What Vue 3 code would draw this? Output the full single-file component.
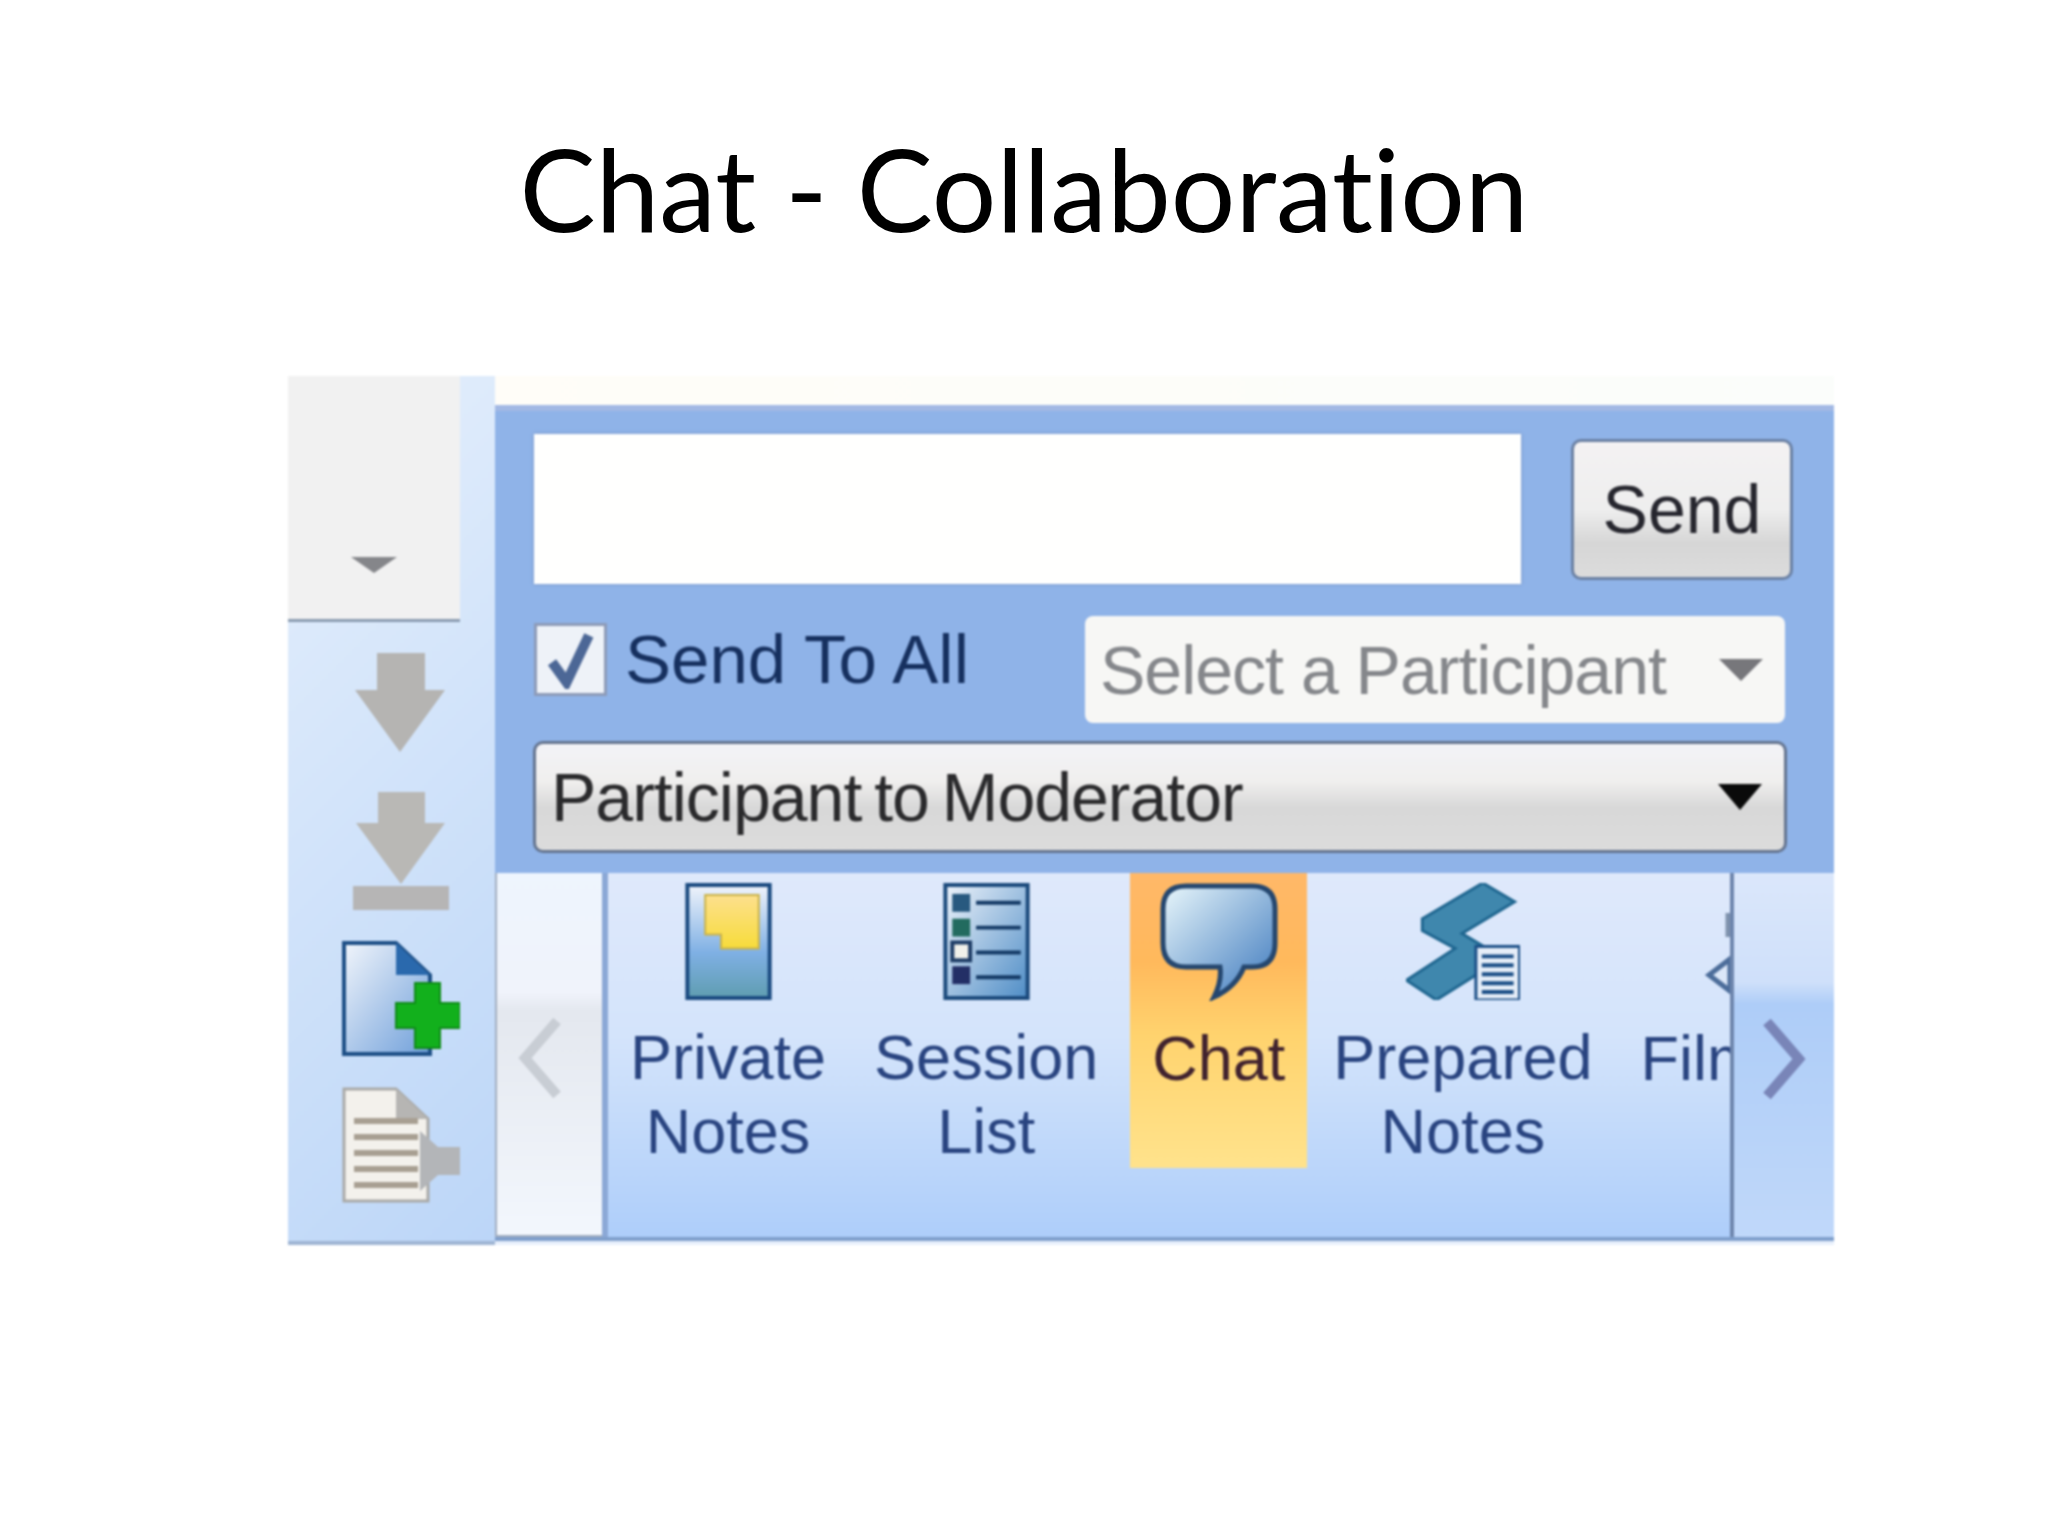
<script setup>
const tabs = [
  { id: 'private', lines: ['Private', 'Notes'] },
  { id: 'session', lines: ['Session', 'List'] },
  { id: 'chat', lines: ['Chat'], active: true },
  { id: 'prepared', lines: ['Prepared', 'Notes'] },
  { id: 'film', lines: ['Film'] }
]
</script>

<template>
  <div class="page">
    <h1 class="title">Chat - Collaboration</h1>

    <div class="panel">
      <aside class="rail">
        <div class="rail-card">
          <svg width="46" height="16" viewBox="0 0 46 16"><path d="M0 0H46L23 16Z" fill="#85868a" /></svg>
        </div>
        <svg class="rail-icon first" width="90" height="99" viewBox="0 0 90 99">
          <path d="M22 0H70V37H90L45 99L0 37H22Z" fill="#b5b4b2" />
        </svg>
        <svg class="rail-icon second" width="96" height="118" viewBox="0 0 96 118">
          <path d="M25 0H72V31H92L48 92L3 31H25Z" fill="#b9b8b5" />
          <rect y="94" width="96" height="24" fill="#b6b5b5" />
        </svg>
        <svg class="rail-icon third" width="118" height="115" viewBox="0 0 118 115">
          <defs>
            <linearGradient id="docFill" x1="0" y1="0" x2="1" y2="1">
              <stop offset="0" stop-color="#f1f5fb" />
              <stop offset="1" stop-color="#6f9fda" />
            </linearGradient>
          </defs>
          <path d="M2 2H54L88 34V113H2Z" fill="url(#docFill)" stroke="#1d4f86" stroke-width="4" />
          <path d="M54 2L88 34H54Z" fill="#2a69ad" />
          <path d="M73 42H98V62H118V87H98V107H73V87H54V62H73Z" fill="#12b01c" stroke="#0e8a18" stroke-width="2" />
        </svg>
        <svg class="rail-icon fourth" width="118" height="116" viewBox="0 0 118 116">
          <path d="M2 2H54L86 32V114H2Z" fill="#f3f1ec" stroke="#a9a9a7" stroke-width="3" />
          <path d="M54 2L86 32H54Z" fill="#b6b5b3" />
          <path d="M12 34H76M12 50H76M12 66H76M12 82H76M12 98H76" stroke="#a89f92" stroke-width="6" />
          <path d="M78 44L96 60H118V88H96L78 104Z" fill="#b3b5b8" />
        </svg>
      </aside>

      <main class="main">
        <div class="strip"></div>

        <section class="compose">
          <div class="send-row">
            <div class="message"></div>
            <button class="send">Send</button>
          </div>

          <div class="option-row">
            <label class="send-all">
              <span class="check">
                <svg width="50" height="58" viewBox="0 0 44 52">
                  <path d="M5 28L18 46L38 4" fill="none" stroke="#4c6796" stroke-width="9" />
                </svg>
              </span>
              Send To All
            </label>
            <div class="participant">
              <span>Select a Participant</span>
              <svg width="44" height="22" viewBox="0 0 44 22"><path d="M0 0H44L22 22Z" fill="#77777b" /></svg>
            </div>
          </div>

          <div class="mode">
            <span>Participant to Moderator</span>
            <svg width="44" height="26" viewBox="0 0 44 26"><path d="M0 0H44L22 26Z" fill="#0a0a0a" /></svg>
          </div>
        </section>

        <nav class="bar">
          <div class="scroll left">
            <svg width="46" height="84" viewBox="0 0 46 84"><path d="M40 5L8 42L40 79" fill="none" stroke="#c8cdd4" stroke-width="10" /></svg>
          </div>

          <div class="tabs">
            <div v-for="tab in tabs" :key="tab.id" class="tab" :class="{ active: tab.active }">
              <svg v-if="tab.id === 'private'" width="87" height="118" viewBox="0 0 87 118">
                <defs>
                  <linearGradient id="noteFill" x1="0" y1="0" x2="0" y2="1">
                    <stop offset="0" stop-color="#f0f4fb" />
                    <stop offset=".6" stop-color="#7fb0e4" />
                    <stop offset="1" stop-color="#5f9db0" />
                  </linearGradient>
                  <linearGradient id="stickyFill" x1="0" y1="0" x2="0" y2="1">
                    <stop offset="0" stop-color="#fde08e" />
                    <stop offset="1" stop-color="#f7dc3a" />
                  </linearGradient>
                </defs>
                <rect x="2" y="2" width="83" height="114" fill="url(#noteFill)" stroke="#1a4a80" stroke-width="4" />
                <path d="M20 12H74V66H36V52H20Z" fill="url(#stickyFill)" stroke="#c9b24a" stroke-width="2" />
              </svg>

              <svg v-else-if="tab.id === 'session'" width="87" height="118" viewBox="0 0 87 118">
                <defs>
                  <linearGradient id="listFill" x1="0" y1="0" x2="1" y2="1">
                    <stop offset="0" stop-color="#eef3fa" />
                    <stop offset="1" stop-color="#4f8dc6" />
                  </linearGradient>
                </defs>
                <rect x="2" y="2" width="83" height="114" fill="url(#listFill)" stroke="#1b4a7c" stroke-width="4" />
                <rect x="9" y="11" width="18" height="18" fill="#28597f" />
                <rect x="9" y="36" width="18" height="18" fill="#226b5f" />
                <rect x="9" y="60" width="18" height="18" fill="#f1f1ea" stroke="#1e3d66" stroke-width="4" />
                <rect x="9" y="84" width="18" height="18" fill="#232f66" />
                <path d="M33 20H78M33 45H78M33 70H78M33 95H78" stroke="#143a66" stroke-width="4" />
              </svg>

              <svg v-else-if="tab.id === 'chat'" width="118" height="118" viewBox="0 0 118 118">
                <defs>
                  <linearGradient id="bubbleFill" x1="0" y1="0" x2="1" y2="1">
                    <stop offset="0" stop-color="#e9f7fb" />
                    <stop offset="1" stop-color="#3c78bd" />
                  </linearGradient>
                </defs>
                <path d="M26 3H92Q115 3 115 26V60Q115 84 92 84H84Q76 104 54 114Q62 98 60 84H26Q3 84 3 60V26Q3 3 26 3Z" fill="url(#bubbleFill)" stroke="#25476f" stroke-width="5" />
              </svg>

              <svg v-else-if="tab.id === 'prepared'" width="114" height="118" viewBox="0 0 114 118">
                <path d="M16 36L77 0L109 19L56 51L81 66L81 86L30 118L0 98L49 66L16 48Z" fill="#3f87ad" stroke="#1f6690" stroke-width="3" />
                <rect x="70" y="64" width="44" height="54" fill="#e6eef8" stroke="#1b4f87" stroke-width="3" />
                <path d="M76 74H108M76 83H108M76 92H108M76 101H108M76 110H108" stroke="#1b4f87" stroke-width="4" />
              </svg>

              <svg v-else width="60" height="118" viewBox="0 0 60 118">
                <path d="M39 92L60 76V108Z" fill="#dbe7f8" stroke="#4c6d9a" stroke-width="5" />
                <path d="M58 30V54" stroke="#7f92ad" stroke-width="5" />
              </svg>

              <div class="label">
                <span v-for="line in tab.lines" :key="line">{{ line }}</span>
              </div>
            </div>
          </div>

          <div class="scroll right">
            <svg width="46" height="84" viewBox="0 0 46 84"><path d="M6 5L38 42L6 79" fill="none" stroke="#7985b8" stroke-width="10" /></svg>
          </div>
        </nav>
      </main>
    </div>
  </div>
</template>

<style>
html,
body {
  margin: 0;
  background: #fff;
}
</style>

<style scoped>
.page {
  width: 2048px;
  height: 1536px;
  overflow: hidden;
  background: #fff;
}

.title {
  margin: 0;
  height: 376px;
  padding-top: 116px;
  box-sizing: border-box;
  text-align: center;
  font-family: Lato, "Open Sans", sans-serif;
  font-size: 114px;
  font-variant-ligatures: none;
  font-weight: 400;
  line-height: 144px;
  color: #000;
}

.panel {
  display: flex;
  width: 1546px;
  height: 869px;
  margin-left: 288px;
  font-family: "Liberation Sans", Arial, sans-serif;
  filter: blur(0.8px);
}

.rail {
  display: flex;
  flex-direction: column;
  width: 207px;
  flex: none;
  box-sizing: border-box;
  border-bottom: 4px solid #9fb5d4;
  background: linear-gradient(135deg, #e6f0fc, #bcd6f8);
}

.rail-card {
  display: flex;
  align-items: flex-end;
  justify-content: center;
  width: 172px;
  height: 246px;
  padding-bottom: 46px;
  box-sizing: border-box;
  border-bottom: 3px solid #8a9bb0;
  background: #f1f1f1;
}

.rail-icon {
  display: block;
  flex: none;
}

.first {
  margin: 31px 0 0 67px;
}

.second {
  margin: 40px 0 0 65px;
}

.third {
  margin: 31px 0 0 54px;
}

.fourth {
  margin: 31px 0 0 54px;
}

.main {
  display: flex;
  flex-direction: column;
  flex: 1;
  min-width: 0;
  background: #e8f0fc;
}

.strip {
  height: 29px;
  background: linear-gradient(90deg, #fffdf8, #fbfdfb);
}

.compose {
  display: flex;
  flex-direction: column;
  height: 468px;
  padding: 23px 47px 0 39px;
  box-sizing: border-box;
  border-top: 6px solid #a2b8e4;
  background: #8fb3e8;
}

.send-row {
  display: flex;
  gap: 50px;
  height: 150px;
}

.message {
  flex: 1;
  background: #fffffe;
  box-shadow: 0 0 4px #7d97c4;
}

.send {
  align-self: center;
  width: 222px;
  height: 141px;
  margin-right: -6px;
  padding: 0;
  border: 3px solid #6a80a3;
  border-radius: 10px;
  background: linear-gradient(#f4f2f3 0%, #eeeeee 50%, #d6d6d6 75%, #dcdcdc 100%);
  font: 400 68px "Liberation Sans", Arial, sans-serif;
  color: #26262e;
}

.option-row {
  display: flex;
  align-items: center;
  justify-content: space-between;
  margin-top: 32px;
  height: 107px;
}

.send-all {
  display: flex;
  align-items: center;
  gap: 18px;
  margin-top: -20px;
  font-size: 69px;
  color: #16305f;
}

.check {
  display: flex;
  align-items: center;
  justify-content: center;
  width: 67px;
  height: 67px;
  border: 3px solid #8d9bb8;
  background: #eef2f8;
}

.participant {
  display: flex;
  align-items: center;
  justify-content: space-between;
  width: 700px;
  height: 107px;
  margin-right: 2px;
  padding: 0 22px 0 15px;
  box-sizing: border-box;
  border-radius: 8px;
  background: #f7f7f5;
  font-size: 68px;
  letter-spacing: -1px;
  color: #85878b;
}

.mode {
  display: flex;
  align-items: center;
  justify-content: space-between;
  height: 112px;
  margin: 18px 0 0 -1px;
  padding: 0 22px 0 15px;
  box-sizing: border-box;
  border: 3px solid #64748f;
  border-radius: 10px;
  background: linear-gradient(#f3f3f7 0%, #f0efee 35%, #d8d8d8 60%, #dcdcdc 100%);
  font-size: 68px;
  letter-spacing: -1px;
  word-spacing: -5px;
  color: #2a2a2c;
}

.bar {
  display: flex;
  height: 368px;
  box-sizing: border-box;
  border-bottom: 4px solid #7f9fcc;
  background: linear-gradient(#dfe9fb, #d4e4fb 45%, #aecefa);
}

.scroll {
  display: flex;
  align-items: center;
  flex: none;
  box-sizing: border-box;
  padding-top: 8px;
}

.left {
  justify-content: center;
  width: 107px;
  padding-right: 20px;
  border: 2px solid #a2aec0;
  border-right: 0;
  border-top: 0;
  background: linear-gradient(#eef5fe 0%, #f0f3fb 33%, #e4e8ef 38%, #f3f7fd 100%);
}

.tabs {
  display: flex;
  flex: 1;
  min-width: 0;
  gap: 4px;
  overflow: hidden;
  border-left: 6px solid #8ba8d6;
  border-right: 4px solid #6d85ad;
}

.tab {
  display: flex;
  flex-direction: column;
  align-items: center;
  flex: none;
  height: 285px;
  padding: 10px 22px 0;
}

.active {
  margin-left: 6px;
  background: linear-gradient(#ffb868 0%, #ffb95c 30%, #ffd36e 55%, #ffe38c 100%);
}

.label {
  display: flex;
  flex-direction: column;
  align-items: center;
  margin-top: 20px;
  font-size: 63px;
  line-height: 74px;
  color: #294480;
}

.active .label {
  color: #40222e;
}

.right {
  justify-content: center;
  width: 100px;
  background: linear-gradient(#dbe7fb 0%, #cfe0fa 30%, #aecdf8 36%, #c0d8fa 100%);
}
</style>
